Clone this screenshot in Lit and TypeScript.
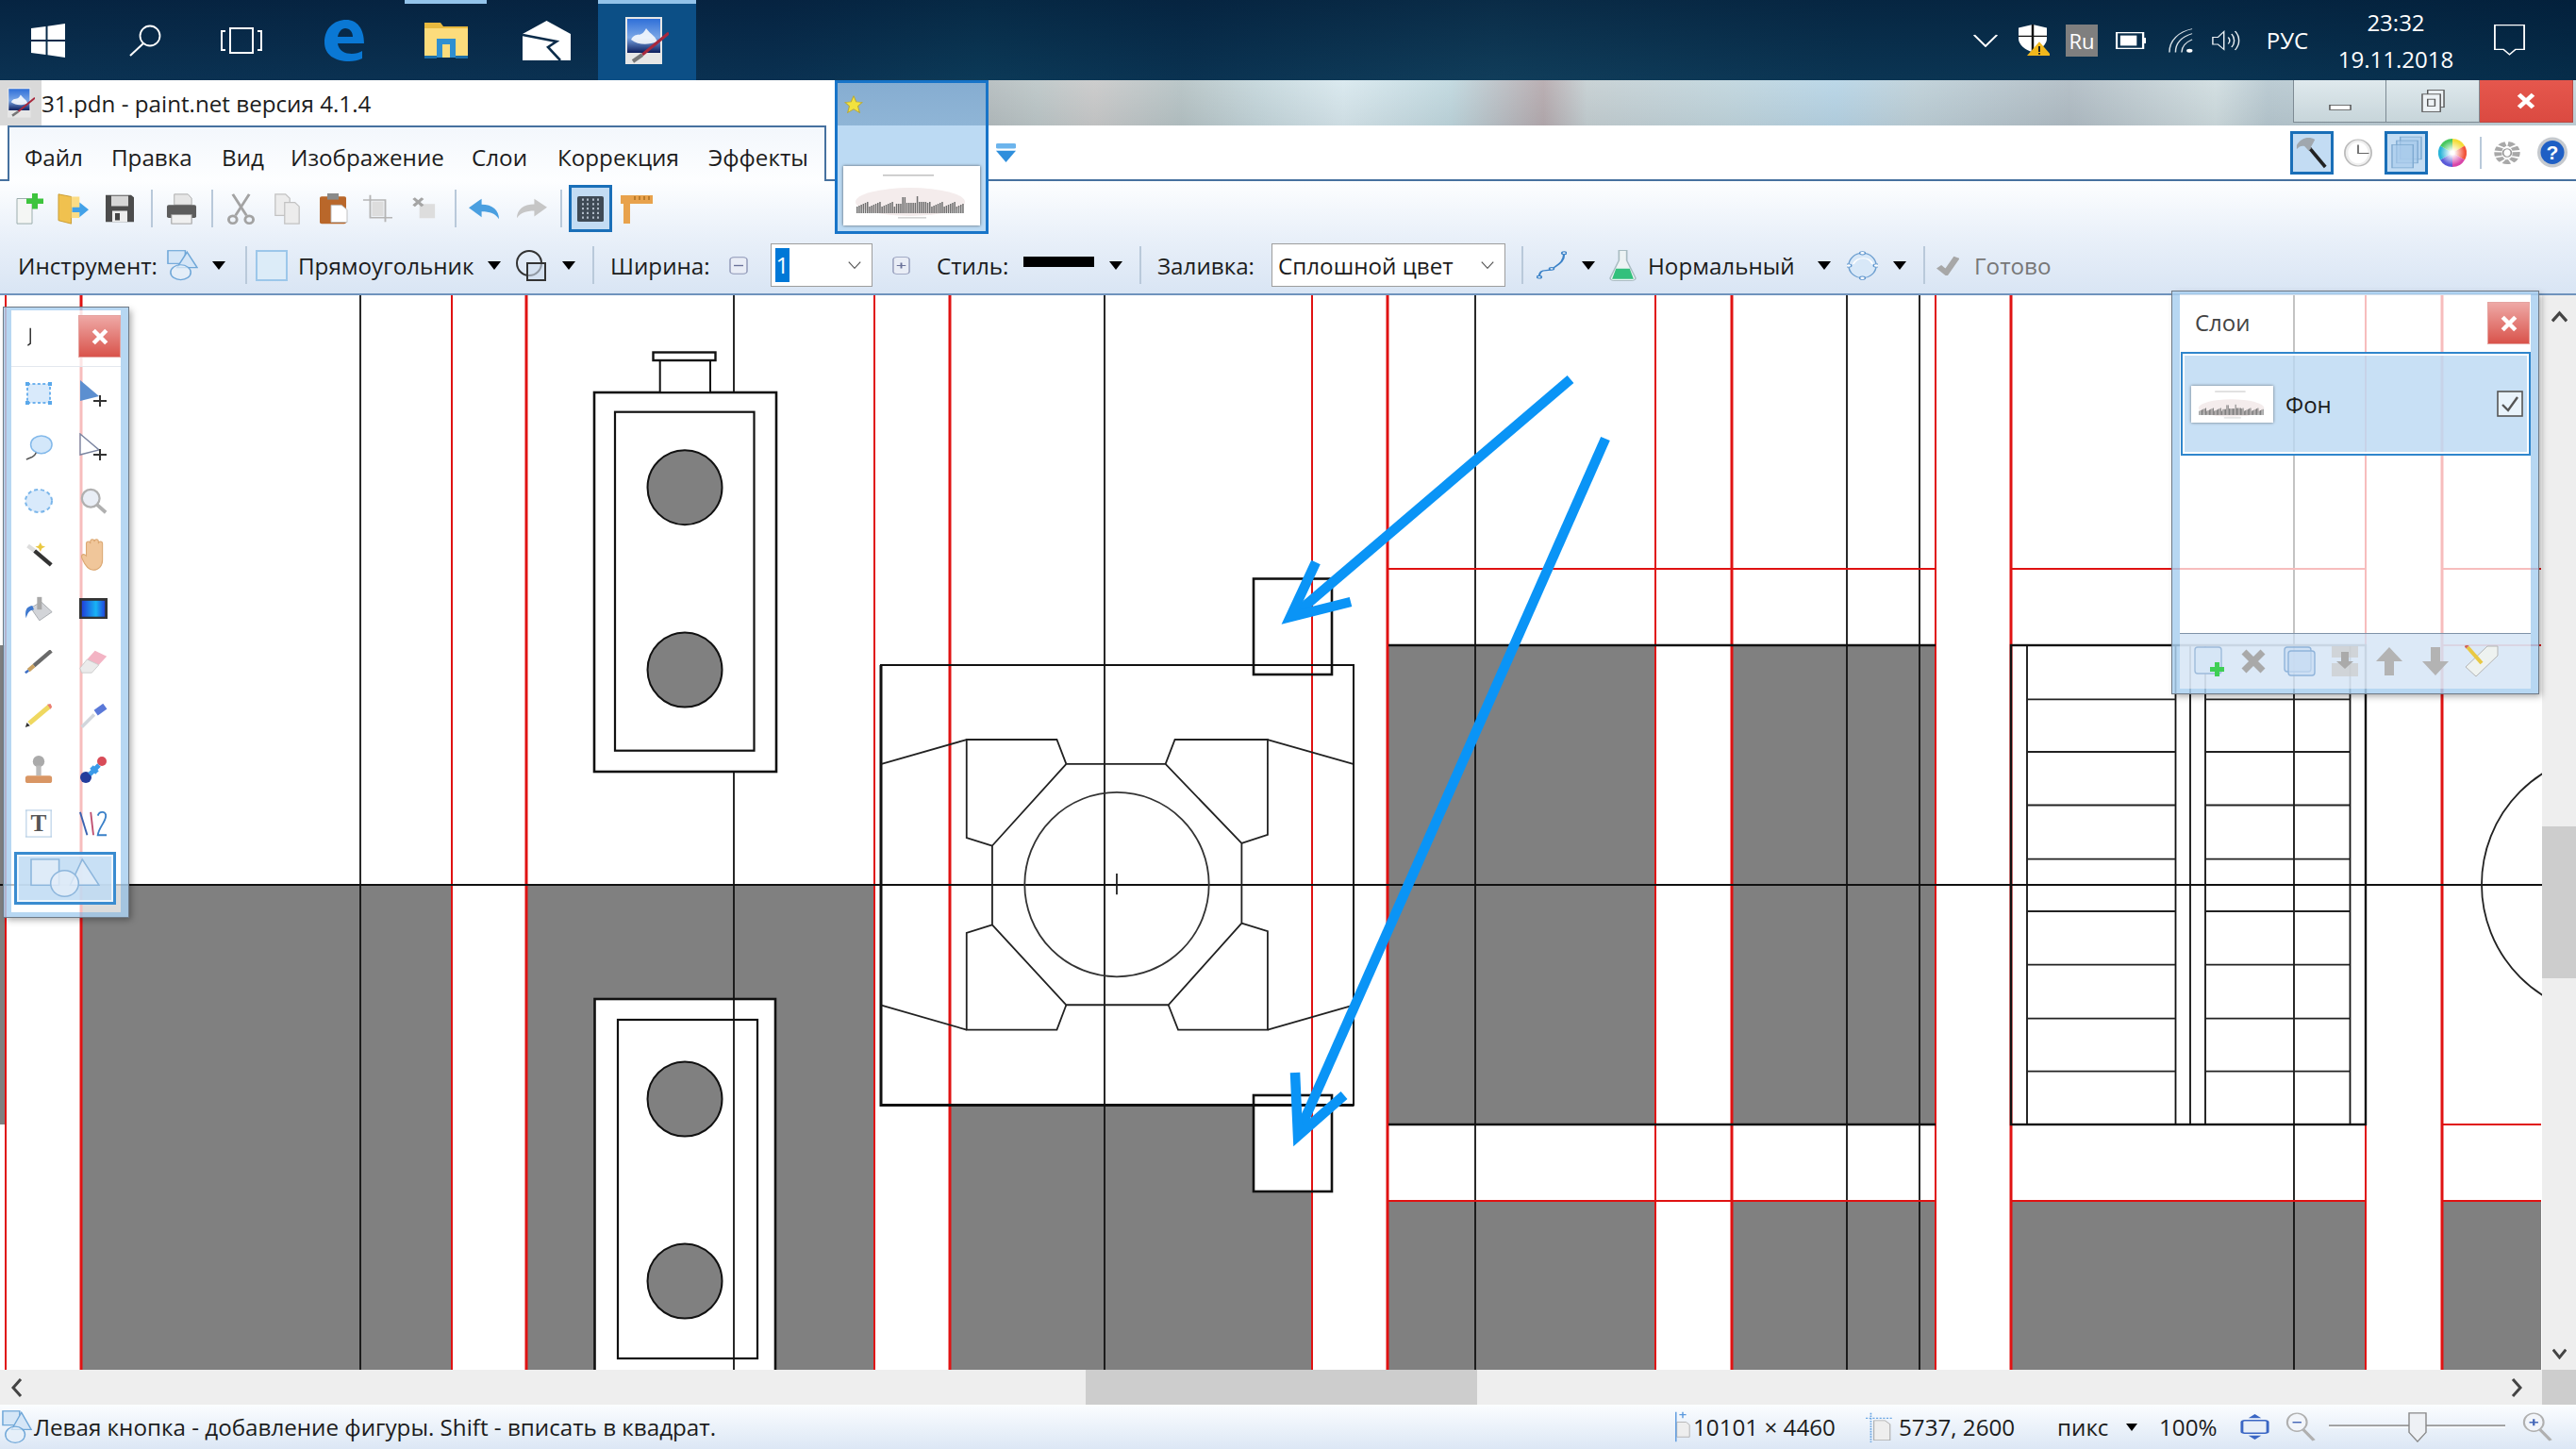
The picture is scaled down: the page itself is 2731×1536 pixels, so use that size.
import { LitElement, html, svg, css, SVGTemplateResult, TemplateResult } from 'lit'
import { customElement } from 'lit/decorators.js'

// every icon: [viewBox, shapes]
const I: Record<string, [string, SVGTemplateResult]> = {
    windows: ['0 0 36 36', svg`<path fill="#fff" d="M0 5 15.5 3V17H0ZM17.5 2.7 36 0V17H17.5ZM0 19H15.5V33L0 31ZM17.5 19H36V36L17.5 33.3Z"/>`],
    search: ['0 0 34 34', svg`<circle cx="22" cy="12" r="10.5" fill="none" stroke="#fff" stroke-width="1.8"/><path d="M15 20 1 33" stroke="#fff" stroke-width="2"/>`],
    taskview: ['0 0 44 28', svg`<path fill="none" stroke="#fff" stroke-width="2" d="M10 1H34V27H10ZM5 4H1V24H5M39 4H43V24H39"/>`],
    edge: ['0 0 44 46', svg`<path fill="#0a78d4" fill-rule="evenodd" d="M1 25C1 10 11 1 24 1 36 1 43 11 43 26H15C16 34 23 37 30 37 34 37 38 36 41 34V42C37 44 32 45 27 45 12 45 1 38 1 25ZM15 19H31C31 14 28 10 23 10 19 10 16 14 15 19Z"/>`],
    folder: ['0 0 46 38', svg`<path fill="#e8b93f" d="M0 0H17L20 4H46V10H0Z"/><path fill="#fcdc7c" d="M0 6H46V37H0Z"/><path fill="#2f8fd0" d="M13 37V17H33V37H27V23H19V37Z"/><path fill="#1b6ea8" d="M0 35H13V38H0ZM33 35H46V38H33Z"/>`],
    mail: ['0 0 51 42', svg`<path fill="#fff" d="M0 14 25.5 0 51 14V42H0Z"/><path fill="none" stroke="#0b2c4a" stroke-width="2.6" d="M0 15 36 22 27 28 40 42"/>`],
    pdn: ['0 0 46 50', svg`<defs><linearGradient id="sk" x1="0" y1="0" x2="0" y2="1"><stop offset="0" stop-color="#2f6fd8"/><stop offset=".55" stop-color="#7aa6e6"/><stop offset="1" stop-color="#0b1d5c"/></linearGradient></defs><rect width="39" height="50" fill="#e6e6e6"/><rect x="2" y="2" width="35" height="36" fill="url(#sk)"/><path fill="#fff" opacity=".85" d="M6 24C12 14 16 24 22 12 28 20 30 18 34 26 24 30 14 30 6 24Z"/><path stroke="#a8283c" stroke-width="3" d="M46 17 18 40"/><path stroke="#777" stroke-width="4" d="M18 40 8 47"/>`],
    chev: ['0 0 26 26', svg`<path fill="none" stroke="#fff" stroke-width="2.4" d="M1 2 13 24 25 2"/>`],
    shield: ['0 0 34 56', svg`<path fill="#fff" d="M16 0 31 6V26C31 36 24 46 16 50 8 46 1 36 1 26V6Z"/><path stroke="#111" stroke-width="2.5" d="M16 0V50M1 21H31"/><path fill="#f2b81c" d="M23 31 36 56H10Z"/><path stroke="#222" stroke-width="2" d="M23 39V49M23 51V54"/>`],
    battery: ['0 0 33 30', svg`<rect x="1" y="1" width="29" height="28" fill="none" stroke="#fff" stroke-width="2.4"/><rect x="5" y="6" width="18" height="18" fill="#fff"/><rect x="30" y="10" width="3" height="10" fill="#fff"/>`],
    wifi: ['0 0 28 46', svg`<g fill="none" stroke="#d8e0e6" stroke-width="1.6"><path d="M1 45C1 22 12 6 27 1"/><path d="M8 45C8 28 15 16 27 10"/><path d="M15 45C15 34 20 26 27 21"/></g><circle cx="24" cy="42" r="3.4" fill="#fff"/>`],
    speaker: ['0 0 33 48', svg`<g fill="none" stroke="#e8eef2" stroke-width="1.6"><path d="M1 17H7L14 5V43L7 32H1Z"/><path d="M19 17C21 21 21 27 19 31"/><path d="M23 10C27 18 27 30 23 38"/><path d="M27 4C33 16 33 32 27 44"/></g>`],
    notif: ['0 0 36 54', svg`<path fill="none" stroke="#fff" stroke-width="2" d="M1 1H35V43H25L18 52 11 43H1Z"/>`],
    min: ['0 0 25 12', svg`<rect x="1" y="1" width="23" height="10" fill="#fff" stroke="#555" stroke-width="1.6"/>`],
    restore: ['0 0 26 40', svg`<g fill="#eef3f6" stroke="#555" stroke-width="1.5"><rect x="7" y="1" width="18" height="30"/><rect x="1" y="8" width="20" height="31"/><rect x="7" y="17" width="8" height="12"/></g>`],
    closex: ['0 0 24 24', svg`<path stroke="#fff" stroke-width="6" d="M3 3 21 21M21 3 3 21"/>`],
    newdoc: ['0 0 32 36', svg`<path fill="#f4f6f4" stroke="#9aa" d="M2 6H18V35H2Z"/><path fill="#3dc43d" d="M18 0H24V6H30V12H24V18H18V12H12V6H18Z"/>`],
    open: ['0 0 34 38', svg`<path fill="#f0c14f" stroke="#c79a30" d="M1 1 15 4V37L1 33Z"/><path fill="#fbdc85" d="M15 4H24V30H15Z"/><path fill="#42a1e8" d="M16 17H24V11L34 20 24 29V23H16Z"/>`],
    save: ['0 0 32 36', svg`<path fill="#4c4c4c" d="M1 1H28L31 4V35H1Z"/><rect x="7" y="2" width="18" height="13" fill="#d6d6d6"/><rect x="8" y="21" width="16" height="14" fill="#ededed"/><rect x="11" y="24" width="5" height="9" fill="#444"/>`],
    print: ['0 0 34 38', svg`<path fill="#e6e6e6" stroke="#aaa" d="M9 1H24L28 6V14H9Z"/><rect x="1" y="14" width="32" height="16" rx="2" fill="#5c5c5c"/><rect x="6" y="26" width="22" height="11" fill="#f0f0f0" stroke="#999"/>`],
    cut: ['0 0 32 38', svg`<g fill="none" stroke="#a3a3a3" stroke-width="3"><path d="M7 1 22 27M25 1 10 27"/><circle cx="7" cy="32" r="4.5"/><circle cx="25" cy="32" r="4.5"/></g>`],
    copy: ['0 0 32 38', svg`<g fill="#ececec" stroke="#c2c2c2" stroke-width="1.4"><path d="M2 1H14L19 6V27H2Z"/><path d="M13 11H25L30 16V37H13Z"/></g>`],
    paste: ['0 0 32 40', svg`<rect x="1" y="4" width="28" height="35" rx="2" fill="#b9672a"/><rect x="9" y="0" width="12" height="8" fill="#8a8a8a"/><path fill="#fff" stroke="#bbb" d="M13 15H24L30 21V37H13Z"/>`],
    crop: ['0 0 34 40', svg`<g fill="none" stroke="#b5b5b5" stroke-width="2"><path d="M9 1V33H34M1 8H26V39"/></g><rect x="11" y="10" width="13" height="21" fill="#ddd"/>`],
    deselect: ['0 0 30 38', svg`<rect x="10" y="12" width="19" height="22" fill="#ddd"/><path stroke="#a5a5a5" stroke-width="4" d="M3 3 14 15M14 3 3 15"/>`],
    undo: ['0 0 34 34', svg`<path fill="#4a9fe0" d="M14 1V10C26 10 33 19 33 33 29 24 23 21 14 21V30L0 15Z"/>`],
    redo: ['0 0 34 34', svg`<path fill="#c6c6c6" d="M20 1V10C8 10 1 19 1 33 5 24 11 21 20 21V30L34 15Z"/>`],
    grid: ['0 0 28 34', svg`<rect width="28" height="34" rx="2" fill="#3f4a55"/><path stroke="#cdd8e4" stroke-width="1.6" stroke-dasharray="3 3" d="M6 3V32M11 3V32M17 3V32M22 3V32"/>`],
    rulers: ['0 0 34 32', svg`<path fill="#e8a24c" d="M0 2H34V11H10V32H3V11H0Z"/><path stroke="#a96d20" stroke-width="1.4" d="M15 3V7M20 3V7M25 3V7M30 3V7"/>`],
    shapes: ['0 0 34 46', svg`<g fill="#d5e6f7" stroke="#6fa7d8" stroke-width="1.6"><rect x="1" y="1" width="19" height="19"/><path d="M22 3 33 26H11Z"/><circle cx="15" cy="33" r="11" fill="#e6f0fa" fill-opacity=".7"/></g>`],
    shapeswide: ['0 0 75 46', svg`<g fill="#e3eef9" fill-opacity=".8" stroke="#8db6dc" stroke-width="1.6"><rect x="1" y="1" width="30" height="30"/><path d="M56 1 74 31H43Z"/><ellipse cx="37" cy="29" rx="15" ry="15"/></g>`],
    ring: ['0 0 33 33', svg`<circle cx="14" cy="14" r="13" fill="none" stroke="#333" stroke-width="2"/><rect x="12" y="14" width="19" height="18" fill="#cfdcec" fill-opacity=".6" stroke="#333" stroke-width="2"/>`],
    dn: ['0 0 14 12', svg`<path d="M0 0H14L7 12Z"/>`],
    ddn: ['0 0 18 12', svg`<path fill="none" stroke="#555" stroke-width="1.5" d="M1 1 9 11 17 1"/>`],
    minus: ['0 0 20 28', svg`<rect x="1" y="1" width="18" height="26" rx="4" fill="#e9edf6" stroke="#8d95b5" stroke-width="1.4"/><path stroke="#6b7299" stroke-width="2" d="M5 14H15"/>`],
    plus: ['0 0 20 32', svg`<rect x="1" y="1" width="18" height="30" rx="4" fill="#e9edf6" stroke="#8d95b5" stroke-width="1.4"/><path stroke="#6b7299" stroke-width="2" d="M5 16H15M10 11V21"/>`],
    curve: ['0 0 34 56', svg`<path fill="none" stroke="#3b82c8" stroke-width="2.4" d="M3 52C3 30 12 42 18 34 24 26 31 22 31 5"/><g fill="#dbe9f7" stroke="#3b82c8" stroke-width="1.8"><circle cx="3" cy="50" r="2.6"/><circle cx="17" cy="34" r="2.6"/><circle cx="31" cy="4" r="2.6"/></g>`],
    flask: ['0 0 28 60', svg`<path fill="#edf3f4" stroke="#a9bcc2" stroke-width="1.6" d="M10 1H18V20L27 54C27 57 25 59 23 59H5C3 59 1 57 1 54L10 20Z"/><path fill="#33c07c" d="M7 36H21L25 56H3Z"/>`],
    globe: ['0 0 34 54', svg`<ellipse cx="17" cy="27" rx="15" ry="23" fill="#d8e8f8" stroke="#6d9fd0" stroke-width="1.6"/><path fill="none" stroke="#fff" stroke-width="2" d="M7 24C12 10 24 10 28 24"/><g fill="#fff" stroke="#5b93cc" stroke-width="1.4"><circle cx="17" cy="4" r="3"/><circle cx="17" cy="50" r="3"/><circle cx="2" cy="27" r="3"/><circle cx="32" cy="27" r="3"/></g>`],
    check: ['0 0 28 34', svg`<path fill="none" stroke="#a7a7a7" stroke-width="8" d="M3 19 12 29 25 3"/>`],
    hammer: ['0 0 37 34', svg`<path stroke="#222" stroke-width="4" d="M14 10 34 32"/><path stroke="#8a8f96" stroke-width="3" d="M13 9 17 13"/><path fill="#a0a7ae" d="M1 9C6 1 15-1 22 3L15 15 10 10C7 9 4 10 1 13Z"/>`],
    clock: ['0 0 34 56', svg`<ellipse cx="17" cy="28" rx="16" ry="26" fill="#eee" stroke="#bbb" stroke-width="2"/><ellipse cx="17" cy="28" rx="12" ry="21" fill="#fff"/><path stroke="#666" stroke-width="2" fill="none" d="M17 12V29H30"/>`],
    layers: ['0 0 34 62', svg`<g fill="#a9cbeb" fill-opacity=".65" stroke="#7ea9d0" stroke-width="1.4"><rect x="10" y="2" width="23" height="42"/><rect x="6" y="9" width="23" height="42"/><rect x="1" y="17" width="23" height="43"/></g>`],
    wheel: ['0 0 30 30', svg`<defs><radialGradient id="wc"><stop offset=".15" stop-color="#fff"/><stop offset="1" stop-color="#fff" stop-opacity="0"/></radialGradient></defs>
        <path fill="#f4dc3a" d="M15 15 15 0A15 15 0 0 1 28 7.5Z"/><path fill="#f2553c" d="M15 15 28 7.5A15 15 0 0 1 28 22.5Z"/><path fill="#d845a8" d="M15 15 28 22.5A15 15 0 0 1 15 30Z"/>
        <path fill="#5a5ad8" d="M15 15 15 30A15 15 0 0 1 2 22.5Z"/><path fill="#2ab4d8" d="M15 15 2 22.5A15 15 0 0 1 2 7.5Z"/><path fill="#48c860" d="M15 15 2 7.5A15 15 0 0 1 15 0Z"/>
        <circle cx="15" cy="15" r="13" fill="url(#wc)"/>`],
    gear: ['0 0 34 56', svg`<ellipse cx="17" cy="28" rx="11" ry="18" fill="none" stroke="#a8a8a8" stroke-width="9" stroke-dasharray="7 3"/><ellipse cx="17" cy="28" rx="5" ry="8" fill="none" stroke="#999" stroke-width="2"/>`],
    help: ['0 0 32 33', svg`<circle cx="16" cy="16.5" r="16" fill="#c5c9ce"/><circle cx="16" cy="16.5" r="12.5" fill="#1f5fc4"/><text x="16" y="24" font-family="Liberation Sans" font-size="21" font-weight="700" fill="#fff" text-anchor="middle">?</text>`],
    star: ['0 0 22 36', svg`<path fill="#f2e23e" stroke="#b8a93a" stroke-width="1.2" d="M11 1 14 13 21 14 16 22 18 35 11 28 4 35 6 22 1 14 8 13Z"/>`],
    more: ['0 0 22 36', svg`<rect width="22" height="10" rx="2" fill="#6cb4ec"/><path fill="#2f8fdc" d="M0 14H22L11 36Z"/>`],
    rect: ['0 0 30 30', svg`<rect x="3" y="5" width="24" height="20" fill="#d9eafb" stroke="#6fb2ee" stroke-width="2" stroke-dasharray="3 2.4"/><g fill="#5aa8ea"><rect x="1" y="3" width="4" height="4"/><rect x="25" y="3" width="4" height="4"/><rect x="1" y="23" width="4" height="4"/><rect x="25" y="23" width="4" height="4"/></g>`],
    movesel: ['0 0 30 30', svg`<path fill="#5c8fd0" d="M1 1 21 18 1 23Z"/><path stroke="#333" stroke-width="2" d="M15 23H29M22 17V29"/>`],
    movepx: ['0 0 30 30', svg`<path fill="#fff" stroke="#7a84a0" stroke-width="1.4" d="M1 1 21 18 1 23Z"/><path stroke="#333" stroke-width="2" d="M15 23H29M22 17V29"/>`],
    lasso: ['0 0 32 30', svg`<ellipse cx="19" cy="12" rx="12" ry="10" fill="#d3e7fa" stroke="#83b9ea" stroke-width="1.6"/><path fill="none" stroke="#555" stroke-width="1.6" d="M13 21C11 27 7 26 2 29"/>`],
    ellipse: ['0 0 30 28', svg`<ellipse cx="15" cy="14" rx="14" ry="12" fill="#d9eafb" stroke="#7bb6ea" stroke-width="2" stroke-dasharray="4 3"/>`],
    zoom: ['0 0 32 30', svg`<circle cx="13" cy="12" r="10" fill="#e9eef6" stroke="#b0b0b0" stroke-width="2.4"/><path stroke="#b0b0b0" stroke-width="4" d="M20 19 30 28"/>`],
    wand: ['0 0 34 30', svg`<path stroke="#333" stroke-width="5" d="M12 10 32 27"/><path stroke="#ddd" stroke-width="5" d="M4 4 12 10"/><path fill="#eac840" d="M19 0 21 4 25 5 21 7 19 11 17 7 13 5 17 4Z"/>`],
    hand: ['0 0 28 32', svg`<path fill="#f0c69a" stroke="#dba771" d="M7 17V5C7 2 11 2 11 5V3C11 0 15 0 15 3V3C15 0 19 0 19 3V5C19 2 23 2 23 5V21C23 27 19 31 14 31 9 31 6 27 3 20 1 16 4 14 7 17Z"/>`],
    bucket: ['0 0 36 32', svg`<path fill="#d2d4d8" stroke="#a0a3a8" d="M8 15 21 7 35 20 19 31Z"/><rect x="16" y="1" width="6" height="16" fill="#a8a8a8"/><path fill="#3f79cf" d="M10 12C2 13 0 19 2 28 4 22 5 18 12 17Z"/>`],
    gradient: ['0 0 32 24', svg`<defs><linearGradient id="gr"><stop offset="0" stop-color="#2136d8"/><stop offset=".6" stop-color="#18b4f4"/><stop offset="1" stop-color="#2136d8"/></linearGradient></defs><rect x="1.5" y="1.5" width="29" height="21" fill="url(#gr)" stroke="#333" stroke-width="3"/>`],
    brush: ['0 0 36 30', svg`<path stroke="#6a6a6a" stroke-width="5" d="M34 1 12 20"/><path stroke="#c8a060" stroke-width="5" d="M12 20 5 26"/><path stroke="#3d6ec4" stroke-width="3" d="M5 26 1 29"/>`],
    eraser: ['0 0 36 30', svg`<path fill="#f3b4c4" d="M20 1 35 8 25 19 10 12Z"/><path fill="#ebebeb" stroke="#c5c5c5" d="M10 12 25 19 16 29H3L1 23Z"/>`],
    pencil: ['0 0 36 30', svg`<path stroke="#efd860" stroke-width="6" d="M32 3 6 25"/><path fill="#eb7d70" d="M29 1 33 0 35 4 33 7Z"/><path fill="#333" d="M1 30 3 24 7 28Z"/>`],
    dropper: ['0 0 34 30', svg`<path stroke="#d2d6dc" stroke-width="4" d="M18 13 3 28"/><path stroke="#5a78d8" stroke-width="8" d="M20 11 31 3"/>`],
    stamp: ['0 0 34 34', svg`<circle cx="17" cy="7" r="7" fill="#aaa"/><rect x="14" y="12" width="6" height="12" fill="#bbb"/><rect x="1" y="24" width="32" height="9" rx="3" fill="#d99664"/>`],
    recolor: ['0 0 30 28', svg`<circle cx="24" cy="5" r="5" fill="#d84c58"/><circle cx="7" cy="22" r="6" fill="#243c9c"/><path stroke="#3a9ae8" stroke-width="5" d="M11 19 21 9M13 11 19 17"/>`],
    ttool: ['0 0 32 32', svg`<g stroke="#a8c4e0" fill="none"><path d="M1 1H31M1 31H31M2 1V31M30 1V31"/></g><text x="16" y="25" font-family="Liberation Serif" font-size="27" font-weight="700" fill="#555" text-anchor="middle">T</text>`],
    lines: ['0 0 32 30', svg`<g fill="none" stroke-width="2"><path stroke="#3a62b0" d="M1 2 9 28"/><path stroke="#c05070" d="M13 2 16 28"/><path stroke="#3a80c8" d="M21 6C23 0 31 1 30 7 29 14 22 20 21 28H31"/></g>`],
    addlayer: ['0 0 32 32', svg`<rect x="1" y="1" width="28" height="28" rx="3" fill="#d6e6f6" stroke="#9dbbdb" stroke-width="1.4"/><path fill="#3fcf55" d="M22 17H27V22H32V27H27V32H22V27H17V22H22Z"/>`],
    dellayer: ['0 0 26 26', svg`<path stroke="#a9a9a9" stroke-width="7" d="M3 3 23 23M23 3 3 23"/>`],
    duplayer: ['0 0 34 32', svg`<g fill="#c8dcf2" fill-opacity=".7" stroke="#90b4da" stroke-width="1.4"><rect x="1" y="1" width="28" height="26" rx="3"/><rect x="5" y="5" width="28" height="26" rx="3"/></g>`],
    mergelayer: ['0 0 30 32', svg`<g fill="#ccc" opacity=".7"><rect x="1" y="0" width="28" height="12"/><rect x="1" y="18" width="28" height="14"/></g><path fill="#aaa" d="M11 6H19V16H24L15 24 6 16H11Z"/>`],
    up: ['0 0 28 30', svg`<path fill="#b3b3b3" d="M14 0 28 15H19V30H9V15H0Z"/>`],
    down: ['0 0 28 30', svg`<path fill="#b3b3b3" d="M14 30 28 15H19V0H9V15H0Z"/>`],
    tag: ['0 0 36 34', svg`<path fill="#eef2f0" stroke="#b5b5b5" d="M1 23 24 1H35V11L12 33Z"/><path stroke="#e8c844" stroke-width="4" d="M3 2 18 19"/><path stroke="#d2695c" stroke-width="4" d="M1 0 3 2"/>`],
    tick: ['0 0 28 28', svg`<rect x="1" y="1" width="26" height="26" fill="#fff" fill-opacity=".6" stroke="#555" stroke-width="1.6"/><path fill="none" stroke="#555" stroke-width="2.4" d="M6 15 12 21 22 7"/>`],
    mark: ['0 0 10 28', svg`<path fill="none" stroke="#222" stroke-width="2" d="M6 1V24L2 27"/>`],
    sizeic: ['0 0 20 46', svg`<path fill="#eee" stroke="#aaa" d="M3 16H14L18 20V38H3Z"/><path stroke="#5c9ade" stroke-width="1.6" d="M2 1V45M6 5H14M10 1V10"/>`],
    posic: ['0 0 28 40', svg`<path fill="#eee" stroke="#aaa" d="M9 11H20L25 16V37H9Z"/><path stroke="#6ba6e3" stroke-width="1.6" stroke-dasharray="2 1.4" d="M1 8H28M6 1V40"/>`],
    fit: ['0 0 34 52', svg`<rect x="3" y="13" width="28" height="26" rx="3" fill="#e8eff8" stroke="#3a66c4" stroke-width="3"/><path fill="#3a66c4" d="M17 0 24 8H10ZM17 52 24 44H10Z"/>`],
    zoomout: ['0 0 34 52', svg`<ellipse cx="13" cy="18" rx="11" ry="16" fill="#f2f5fa" stroke="#b0b0b0" stroke-width="2.2"/><path stroke="#b0b0b0" stroke-width="4" d="M20 31 32 50"/><path stroke="#4668b8" stroke-width="2.4" d="M8 18H18"/>`],
    zoomin: ['0 0 34 52', svg`<ellipse cx="13" cy="18" rx="11" ry="16" fill="#f2f5fa" stroke="#b0b0b0" stroke-width="2.2"/><path stroke="#b0b0b0" stroke-width="4" d="M20 31 32 50"/><path stroke="#4668b8" stroke-width="2.4" d="M8 18H18M13 12V24"/>`],
    slider: ['0 0 187 36', svg`<path stroke="#999" stroke-width="2" d="M0 16H187"/><path stroke="#fff" stroke-width="1" d="M0 18H187"/><path fill="#eef1f5" stroke="#888" stroke-width="1.4" d="M85 1H103V24L94 35 85 24Z"/>`],
}

// with a height the drawing is fitted to the box, without one it keeps its shape
const icon = (k: string, w: number, h?: number) =>
    h
        ? html`<svg viewBox=${I[k][0]} preserveAspectRatio="none" style="width:${w}px;height:${h}px">${I[k][1]}</svg>`
        : html`<svg viewBox=${I[k][0]} style="width:${w}px">${I[k][1]}</svg>`

type Slot = { l: number; w: number; i?: string; s?: number; h?: number; t?: string; c?: string; n?: TemplateResult }
const at = (cx: number, i: string, w = 34, h?: number): Slot => ({ l: cx - w / 2, w, i, h })
const boxed = (cx: number, i: string, w: number, s: number, h: number): Slot => ({ l: cx - w / 2, w, i, s, h, c: 'sel' })
const tx = (l: number, w: number, t: string, c = ''): Slot => ({ l, w, t, c })

// lays out a row from left edges in page pixels, the gaps become margins
const lay = (slots: Slot[], start = 0) => {
    let x = start
    return slots.map((s) => {
        const gap = s.l - x
        x = s.l + s.w
        return html`<div class="slot ${s.c ?? ''}" style="margin-left:${gap}px;width:${s.w}px">
            ${s.i ? icon(s.i, s.s ?? s.w, s.h) : s.n ?? s.t}
        </div>`
    })
}

const task: Slot[] = [
    { l: 0, w: 102, i: 'windows', s: 36 },
    { l: 102, w: 104, i: 'search', s: 34 },
    { l: 206, w: 100, i: 'taskview', s: 44 },
    { l: 314, w: 102, i: 'edge', s: 44 },
    { l: 429, w: 87, i: 'folder', s: 46, c: 'open' },
    { l: 528, w: 102, i: 'mail', s: 51 },
    { l: 634, w: 104, i: 'pdn', s: 46, c: 'open active' },
]
const tray: Slot[] = [
    at(2105, 'chev', 26, 14),
    at(2156, 'shield', 34, 33),
    { l: 2190, w: 34, t: 'Ru', c: 'ru' },
    at(2259, 'battery', 32, 18),
    at(2312, 'wifi', 26, 26),
    at(2360, 'speaker', 30, 24),
    tx(2397, 56, 'РУС', 'center'),
    { l: 2465, w: 150, c: 'clock', n: html`<span>23:32</span><span>19.11.2018</span>` },
    at(2660, 'notif', 33, 33),
]
const menu: Slot[] = [
    tx(26, 60, 'Файл'), tx(118, 90, 'Правка'), tx(235, 50, 'Вид'), tx(308, 170, 'Изображение'),
    tx(500, 62, 'Слои'), tx(591, 130, 'Коррекция'), tx(751, 118, 'Эффекты'),
]
const side: Slot[] = [
    boxed(2451, 'hammer', 46, 34, 34), at(2500, 'clock', 30, 30), boxed(2551, 'layers', 46, 33, 35), at(2600, 'wheel', 30, 30),
    { l: 2629, w: 2, c: 'sep short' }, at(2658, 'gear', 30, 30), at(2706, 'help', 32, 33),
]
const tools: Slot[] = [
    at(32, 'newdoc', 32, 33), at(77, 'open', 33, 33), at(127, 'save', 32, 30), { l: 160, w: 2, c: 'sep' }, at(192, 'print', 33, 33),
    { l: 224, w: 2, c: 'sep' }, at(255, 'cut', 31, 33), at(304, 'copy', 29, 33), at(354, 'paste', 32, 33), at(400, 'crop', 32, 30),
    at(449, 'deselect', 26, 26), { l: 482, w: 2, c: 'sep' }, at(513, 'undo', 33, 23), at(563, 'redo', 33, 22),
    { l: 594, w: 2, c: 'sep' }, boxed(626, 'grid', 46, 28, 27), at(675, 'rulers', 34, 32),
]
const options: Slot[] = [
    tx(19, 155, 'Инструмент:'), at(193, 'shapes', 33, 33), at(232, 'dn', 14, 9), { l: 260, w: 2, c: 'sep' },
    { l: 271, w: 34, c: 'swatch' }, tx(316, 198, 'Прямоугольник'), at(524, 'dn', 14, 9), at(563, 'ring', 33, 33),
    at(603, 'dn', 14, 9), { l: 628, w: 2, c: 'sep' }, tx(647, 110, 'Ширина:'), at(783, 'minus', 20, 19),
    {
        l: 817, w: 108, c: 'field',
        n: html`<span class="picked">1</span>${icon('ddn', 14, 8)}`,
    },
    at(955, 'plus', 19, 19), tx(993, 80, 'Стиль:'), { l: 1085, w: 75, c: 'pen' }, at(1183, 'dn', 14, 9),
    { l: 1208, w: 2, c: 'sep' }, tx(1227, 110, 'Заливка:'),
    { l: 1348, w: 248, c: 'field', n: html`<span>Сплошной цвет</span>${icon('ddn', 14, 8)}` },
    { l: 1613, w: 2, c: 'sep' }, at(1645, 'curve', 32, 31), at(1684, 'dn', 14, 9), at(1720, 'flask', 29, 33),
    tx(1747, 170, 'Нормальный'), at(1934, 'dn', 14, 9), at(1974, 'globe', 33, 31), at(2014, 'dn', 14, 9),
    { l: 2039, w: 2, c: 'sep' }, at(2065, 'check', 24, 21), tx(2093, 90, 'Готово', 'off'),
]
const status: Slot[] = [
    { l: 2, w: 32, i: 'shapes', s: 32, h: 36 }, tx(36, 800, 'Левая кнопка - добавление фигуры. Shift - вписать в квадрат.'),
    at(1784, 'sizeic', 18, 33), tx(1795, 170, '10101 × 4460'), at(1992, 'posic', 30, 32), tx(2013, 140, '5737, 2600'),
    tx(2181, 60, 'пикс'), at(2260, 'dn', 12, 8), tx(2289, 70, '100%'), at(2390, 'fit', 33, 27), at(2439, 'zoomout', 32, 31),
    at(2562, 'slider', 187, 32), at(2690, 'zoomin', 32, 31),
]
const toolIcons = [
    'rect', 'movesel', 'lasso', 'movepx', 'ellipse', 'zoom', 'wand', 'hand', 'bucket', 'gradient',
    'brush', 'eraser', 'pencil', 'dropper', 'stamp', 'recolor', 'ttool', 'lines',
]
const layerIcons: Slot[] = [
    at(2342, 'addlayer', 32), at(2389, 'dellayer', 26), at(2438, 'duplayer', 34), at(2486, 'mergelayer', 30),
    at(2533, 'up', 28), at(2582, 'down', 28), at(2631, 'tag', 36),
]

// the drawing, in page coordinates
const GREY = [
    [0, 684, 6, 508], [86, 938, 393, 514], [558, 938, 369, 514], [1007, 1171, 384, 281],
    [1472, 684, 283, 508], [1836, 684, 216, 508], [1472, 1273, 283, 179], [1836, 1273, 216, 179],
    [2132, 1273, 376, 179], [2589, 1273, 105, 179],
]
const RED = [
    [6, 2], [86, 3], [479, 2], [558, 3], [927, 2], [1007, 3], [1391, 2], [1471, 3],
    [1755, 2], [1836, 3], [2052, 2], [2132, 3], [2508, 2], [2589, 3],
]
const BLACK = [382, 778, 1171, 1564, 1958, 2035, 2432]
const RED_H = [
    [603, 1471, 2052], [603, 2132, 2508], [603, 2589, 2694], [684, 2589, 2694], [1192, 2589, 2694],
    [1273, 1471, 2052], [1273, 2132, 2508], [1273, 2589, 2694],
]
const RUNGS = [741.4, 797, 853.5, 910.6, 966, 1022.7, 1079.7, 1135.6]
const PART = [
    [[602, 515], [877, 515], [1088, 703], [1088, 893], [885, 1087], [602, 1087], [397, 897], [397, 709], [602, 515]],
    [[602, 515], [576, 457], [326, 457], [326, 690], [397, 709]],
    [[877, 515], [903, 457], [1160, 457], [1160, 683], [1088, 703]],
    [[397, 897], [326, 916], [326, 1146], [576, 1146], [602, 1087]],
    [[1088, 893], [1160, 912], [1160, 1146], [912, 1146], [885, 1087]],
    [[90, 515], [326, 457]], [[1160, 457], [1397, 515]], [[90, 1088], [326, 1146]], [[1160, 1146], [1397, 1088]],
    [[742, 775], [742, 825]],
]
const partPoints = (p: number[][]) => p.map(([x, y]) => `${900 + x / 2.613},${580 + y / 2.24}`).join(' ')

const lamp = (x0: number, x1: number, ix0: number, ix1: number, top: number, itop: number, ibot: number, bot: number, cy: number[]) => svg`
    <rect x=${x0} y=${top} width=${x1 - x0} height=${bot - top} fill="#fff" stroke="#111" stroke-width="2.6"/>
    <rect x=${ix0} y=${itop} width=${ix1 - ix0} height=${ibot - itop} fill="#fff" stroke="#111" stroke-width="2.2"/>
    ${cy.map((y) => svg`<circle cx="726" cy=${y} r="39.5" fill="#808080" stroke="#111" stroke-width="2"/>`)}
`

// tiny copy of the document, used on the tab and in the layer row
const BARS = Array.from({ length: 52 }, (_, i) => 7 + ((i * 37) % 6) + (i > 18 && i < 34 ? ((i * 13) % 7) : 0))
const preview = (w: number, h: number) => html`<svg viewBox="0 0 145 63" preserveAspectRatio="none" style="width:${w}px;height:${h}px">
    <rect width="145" height="63" fill="#fff"/>
    <rect x="42" y="9" width="54" height="1.6" fill="#c4c4c4"/>
    <ellipse cx="71" cy="38" rx="58" ry="15" fill="#f4ecec"/>
    ${BARS.map((b, i) => svg`<rect x=${14 + i * 2.2} y=${50 - b} width="1.5" height=${b} fill="#707070"/>`)}
    <rect x="58" y="54" width="30" height="1.6" fill="#d4d4d4"/>
</svg>`

@customElement('app-root')
export class AppRoot extends LitElement {
    static styles = css`
        :host {
            display: block;
            position: relative;
            width: 2731px;
            height: 1536px;
            overflow: hidden;
            font-family: 'Open Sans', 'Liberation Sans', sans-serif;
            font-size: 24.2px;
            color: #1c1c1c;
            background: #fff;
        }

        svg {
            display: block;
            flex: none;
        }

        .row {
            display: flex;
            align-items: center;
        }

        .slot {
            flex: none;
            display: flex;
            align-items: center;
            justify-content: center;
            white-space: nowrap;
        }

        .slot:not(:has(svg)) {
            justify-content: flex-start;
        }

        .taskbar {
            height: 85px;
            color: #fff;
            font-size: 24px;
            background: linear-gradient(180deg, rgba(0, 20, 45, 0.45), rgba(10, 55, 85, 0.2)),
                linear-gradient(90deg, #0b3152 0%, #0a2f50 30%, #0c3a58 38%, #0a3150 46%, #123f5c 58%, #0b3452 72%, #0a3453 85%, #052a47 100%);
        }

        .taskbar .slot {
            height: 85px;
            position: relative;
        }

        .open::before {
            content: '';
            position: absolute;
            left: 0;
            right: 0;
            top: 0;
            height: 4px;
            background: #93c3ea;
        }

        .active {
            background: #0c4f86;
        }

        .taskbar .ru {
            height: 34px;
            justify-content: center;
            background: #7f7f7f;
            font-size: 22px;
        }

        .center {
            justify-content: center !important;
        }

        .taskbar .clock {
            flex-direction: column;
            justify-content: center;
            gap: 8px;
            line-height: 31px;
        }

        .titlebar {
            height: 48px;
            display: flex;
        }

        .title {
            width: 885px;
            display: flex;
            align-items: center;
            background: #fff;
        }

        .appicon {
            width: 44px;
            height: 48px;
            display: flex;
            align-items: center;
            justify-content: center;
            background: #d9d9d9;
        }

        .glass {
            flex: 1;
            display: flex;
            justify-content: flex-end;
            padding-right: 3px;
            background: linear-gradient(180deg, rgba(255, 255, 255, 0.08), rgba(120, 130, 135, 0.12)),
                linear-gradient(90deg, #8fb5d6 0%, #b4bcbe 8.8%, #bcc6c7 11.6%, #c9c9c9 14.9%, #b5c2c4 19.9%, #c5d7dc 24.5%, #d8e8ee 29.2%, #bfd7de 35.4%, #b5a9ad 40.7%, #c5cfd2 43.2%, #c0d5dd 51.2%, #b6d4e6 57.5%, #bed0d8 62.1%, #b0bcc4 70.9%, #d0dde0 79.3%, #b7c8d0 82.3%, #c5d5dc 100%);
        }

        .ctl {
            width: 99px;
            height: 45px;
            display: flex;
            align-items: center;
            justify-content: center;
            box-sizing: border-box;
            border: 1px solid #7d8a93;
            border-top: none;
            background: linear-gradient(180deg, #dfe9ed, #c7d5da);
        }

        .ctl + .ctl {
            border-left: none;
        }

        .ctl.low {
            padding-top: 14px;
        }

        .ctl.x {
            background: linear-gradient(180deg, #e5574d, #db4a41);
            border-color: #b84a44;
        }

        .menu {
            height: 59px;
            display: flex;
            box-sizing: border-box;
            align-items: center;
            border-bottom: 2px solid #46719f;
            background: #fff;
        }

        .menutab {
            width: 868px;
            height: 59px;
            margin-left: 8px;
            margin-top: 2px;
            padding-top: 6px;
            box-sizing: border-box;
            border: 2px solid #46719f;
            border-bottom: none;
            background: linear-gradient(180deg, #f3f7fc, #fdfeff);
            position: relative;
            z-index: 1;
        }

        .sel {
            height: 50px;
            box-sizing: border-box;
            border: 3px solid #1a6fb8;
            background: #c3dcf3;
        }

        .menu .sel {
            height: 46px;
        }

        .bars {
            background: linear-gradient(180deg, #fdfeff 0%, #e9f0f9 50%, #d9e5f4 100%);
            border-bottom: 2px solid #6f93bd;
        }

        .toolbar {
            height: 58px;
        }

        .options {
            height: 60px;
            padding-top: 1px;
        }

        .sep {
            height: 40px;
            background: #b9c9da;
        }

        .sep.short {
            height: 34px;
        }

        .swatch {
            height: 33px;
            box-sizing: border-box;
            border: 2px solid #9cc7ea;
            background: #dcecf8;
        }

        .pen {
            height: 11px;
            background: #000;
            margin-top: -8px;
        }

        .field {
            height: 46px;
            box-sizing: border-box;
            justify-content: space-between !important;
            padding: 0 11px 0 6px;
            background: #fff;
            border: 1px solid #9d9d9d;
        }

        .picked {
            width: 15px;
            line-height: 36px;
            margin-left: -2px;
            text-align: center;
            color: #fff;
            background: #0078d7;
        }

        .off {
            color: #777;
        }

        .work {
            height: 1176px;
            display: grid;
            grid-template-columns: 2695px 36px;
            grid-template-rows: 1139px 37px;
            background: #eee;
        }

        .canvas {
            width: 2695px;
            height: 1139px;
            background: #fff;
        }

        .vbar {
            display: flex;
            flex-direction: column;
            align-items: center;
            padding-top: 16px;
            box-sizing: border-box;
        }

        .vthumb {
            width: 36px;
            height: 161px;
            margin-top: 534px;
            background: #cdcdcd;
        }

        .vdown {
            margin-top: 392px;
        }

        .hbar {
            display: flex;
            align-items: center;
        }

        .hthumb {
            align-self: stretch;
            width: 415px;
            margin-left: 1127px;
            background: #cdcdcd;
        }

        .hright {
            margin-left: 1096px;
        }

        .hleft {
            margin-left: 12px;
        }

        .corner {
            background: #cdcdcd;
        }

        .status {
            height: 47px;
            background: linear-gradient(180deg, #fbfdff, #dce7f5);
        }

        .tab {
            position: absolute;
            z-index: 2;
            left: 885px;
            top: 85px;
            width: 163px;
            height: 163px;
            box-sizing: border-box;
            border: 3px solid #1874c8;
            background: linear-gradient(180deg, #86add1 0, #8fb5d6 45px, #bcdaf3 45px, #bcdaf3 100%);
            padding: 11px 5px 0;
        }

        .tabthumb {
            margin: 77px 0 0 1px;
            box-shadow: 0 0 3px rgba(0, 0, 0, 0.6);
            width: 145px;
        }

        .star {
            position: absolute;
            left: 7px;
            top: 13px;
        }

        .win {
            position: absolute;
            z-index: 3;
            box-sizing: border-box;
            display: flex;
            flex-direction: column;
            border-style: solid;
            border-color: rgba(170, 208, 240, 0.85);
            border-width: 3px 8px 5px;
            background: rgba(255, 255, 255, 0.72);
            background-clip: padding-box;
            box-shadow: 0 0 0 1px #6f7a86, 3px 3px 7px rgba(0, 0, 0, 0.35);
        }

        .x-btn {
            width: 45px;
            height: 45px;
            display: flex;
            align-items: center;
            justify-content: center;
            box-sizing: border-box;
            border: 1px solid #e5a3a0;
            background: linear-gradient(180deg, #eea9a6, #d9534b);
        }

        .toolwin {
            left: 4px;
            top: 326px;
            width: 132px;
            height: 646px;
        }

        .toolhead {
            height: 60px;
            display: flex;
            align-items: center;
            justify-content: space-between;
            padding: 0 0 4px 16px;
            box-sizing: border-box;
            background: rgba(255, 255, 255, 0.6);
            border-bottom: 1px solid #e4e8ee;
        }

        .toolgrid {
            display: grid;
            grid-template-columns: 58px 58px;
            grid-auto-rows: 56.9px;
            place-items: center;
        }

        .shapebtn {
            width: 108px;
            height: 56px;
            margin: 2px 0 0 3px;
            box-sizing: border-box;
            border: 3px solid #3a8cd0;
            outline: 2px solid rgba(255, 255, 255, 0.7);
            outline-offset: -5px;
            background: rgba(190, 218, 243, 0.85);
            display: flex;
            align-items: center;
            justify-content: center;
        }

        .layerwin {
            left: 2303px;
            top: 309px;
            width: 388px;
            height: 426px;
        }

        .layerhead {
            height: 61px;
            display: flex;
            align-items: center;
            justify-content: space-between;
            padding: 0 1px 0 16px;
            font-size: 24px;
            color: #444;
        }

        .layerhead span {
            margin-bottom: 2px;
        }

        .layerrow {
            height: 110px;
            margin-left: 1px;
            box-sizing: border-box;
            border: 2px solid #2f86cc;
            outline: 2px solid #fff;
            outline-offset: -4px;
            background: rgba(186, 216, 243, 0.8);
            display: flex;
            align-items: center;
            padding: 0 6px 0 9px;
        }

        .layerrow .thumb {
            box-shadow: 0 0 3px rgba(0, 0, 0, 0.5);
        }

        .layerrow span {
            flex: 1;
            margin-left: 13px;
            font-size: 24px;
        }

        .layerempty {
            flex: 1;
            border-bottom: 1px solid #7f93a8;
        }

        .layerbar {
            height: 58px;
            background: rgba(205, 223, 243, 0.7);
        }
    `

    render() {
        return html`
            <div class="row taskbar">${lay(task)}${lay(tray, 738)}</div>
            <div class="titlebar">
                <div class="title">
                    <div class="appicon">${icon('pdn', 29)}</div>
                    <span>31.pdn - paint.net версия 4.1.4</span>
                </div>
                <div class="glass">
                    <div class="ctl low">${icon('min', 24, 6)}</div>
                    <div class="ctl">${icon('restore', 25, 24)}</div>
                    <div class="ctl x">${icon('closex', 20, 18)}</div>
                </div>
            </div>
            <div class="menu">
                <div class="menutab row">${lay(menu, 10)}</div>
                ${lay([at(1066, 'more', 21, 20)], 876)}${lay(side, 1076.5)}
            </div>
            <div class="bars">
                <div class="row toolbar">${lay(tools)}</div>
                <div class="row options">${lay(options)}</div>
            </div>
            <div class="work">
                ${this.renderCanvas()}
                <div class="vbar">
                    <svg viewBox="0 0 18 14" style="width:17px"><path fill="none" stroke="#444" stroke-width="3.4" d="M1 12 9 3 17 12"/></svg>
                    <div class="vthumb"></div>
                    <svg class="vdown" viewBox="0 0 18 14" style="width:15px"><path fill="none" stroke="#444" stroke-width="3.4" d="M1 2 9 12 17 2"/></svg>
                </div>
                <div class="hbar">
                    <svg class="hleft" viewBox="0 0 12 20" style="width:12px"><path fill="none" stroke="#444" stroke-width="3" d="M10 1 2 10 10 19"/></svg>
                    <div class="hthumb"></div>
                    <svg class="hright" viewBox="0 0 12 20" style="width:12px"><path fill="none" stroke="#444" stroke-width="3" d="M2 1 10 10 2 19"/></svg>
                </div>
                <div class="corner"></div>
            </div>
            <div class="row status">${lay(status)}</div>

            <div class="tab">
                <div class="star">${icon('star', 20, 19)}</div>
                <div class="tabthumb">${preview(145, 63)}</div>
            </div>

            <div class="win toolwin">
                <div class="toolhead">
                    ${icon('mark', 7, 20)}
                    <div class="x-btn">${icon('closex', 18)}</div>
                </div>
                <div class="toolgrid">${toolIcons.map((k) => icon(k, 30))}</div>
                <div class="shapebtn">${icon('shapeswide', 74, 42)}</div>
            </div>

            <div class="win layerwin">
                <div class="layerhead">
                    <span>Слои</span>
                    <div class="x-btn">${icon('closex', 18)}</div>
                </div>
                <div class="layerrow">
                    <div class="thumb">${preview(87, 39)}</div>
                    <span>Фон</span>
                    ${icon('tick', 28)}
                </div>
                <div class="layerempty"></div>
                <div class="row layerbar">${lay(layerIcons, 2311)}</div>
            </div>
        `
    }

    renderCanvas() {
        return html`<svg class="canvas" viewBox="0 313 2695 1139">
            ${GREY.map(([x, y, w, h]) => svg`<rect x=${x} y=${y} width=${w} height=${h} fill="#808080"/>`)}
            <rect x="1329" y="1161" width="83" height="102" fill="#fff"/>
            ${lamp(630.5, 822, 655, 803, 1059, 1081, 1440, 1500, [1165, 1358])}
            ${RED.map(([x, w]) => svg`<path d="M${x} 313V1452" stroke="#e01212" stroke-width=${w}/>`)}
            ${BLACK.map((x) => svg`<path d="M${x} 313V1452" stroke="#111" stroke-width="1.8"/>`)}
            ${RED_H.map(([y, a, b]) => svg`<path d="M${a} ${y}H${b}" stroke="#e01212" stroke-width="2"/>`)}
            <path d="M0 938H2695" stroke="#111" stroke-width="1.8"/>
            <path d="M1472 684H2052M1472 1192H2052" stroke="#111" stroke-width="2.4"/>

            ${lamp(630, 823, 652, 799.5, 416, 436.7, 795.7, 818, [516.7, 710])}
            <rect x="699.7" y="382" width="53.3" height="34" fill="#fff" stroke="#111" stroke-width="2"/>
            <rect x="692.5" y="373.5" width="66" height="8.5" fill="#fff" stroke="#111" stroke-width="2.4"/>

            <rect x="934" y="705" width="501" height="466.5" fill="none" stroke="#111" stroke-width="2"/>
            <path d="M934 705V1171.5H1435" fill="none" stroke="#111" stroke-width="3"/>
            <rect x="1329" y="613.5" width="83" height="101.5" fill="none" stroke="#111" stroke-width="2.6"/>
            <rect x="1329" y="1161" width="83" height="102" fill="none" stroke="#111" stroke-width="2.6"/>
            ${PART.map((p) => svg`<polyline points=${partPoints(p)} fill="none" stroke="#222" stroke-width="1.8"/>`)}
            <circle cx="1184" cy="937.6" r="97.7" fill="none" stroke="#333" stroke-width="1.8"/>

            <rect x="2132" y="684" width="376" height="508" fill="none" stroke="#111" stroke-width="2.4"/>
            <path d="M2149 684V1192M2306.5 684V1192M2322 684V1192M2338 684V1192M2491.5 684V1192" stroke="#111" stroke-width="1.8"/>
            ${RUNGS.map((y) => svg`<path d="M2149 ${y}H2306.5M2338 ${y}H2491.5" stroke="#222" stroke-width="1.8"/>`)}
            <circle cx="2770" cy="937.5" r="139" fill="none" stroke="#222" stroke-width="1.8"/>

            <g fill="none" stroke="#0a94f6" stroke-width="10.5">
                <path d="M1665 402 1372 652"/>
                <polyline points="1395,596 1368,654 1432,638"/>
                <path d="M1702 465 1378 1198"/>
                <polyline points="1373,1137 1376,1204 1425,1161"/>
            </g>
        </svg>`
    }
}
